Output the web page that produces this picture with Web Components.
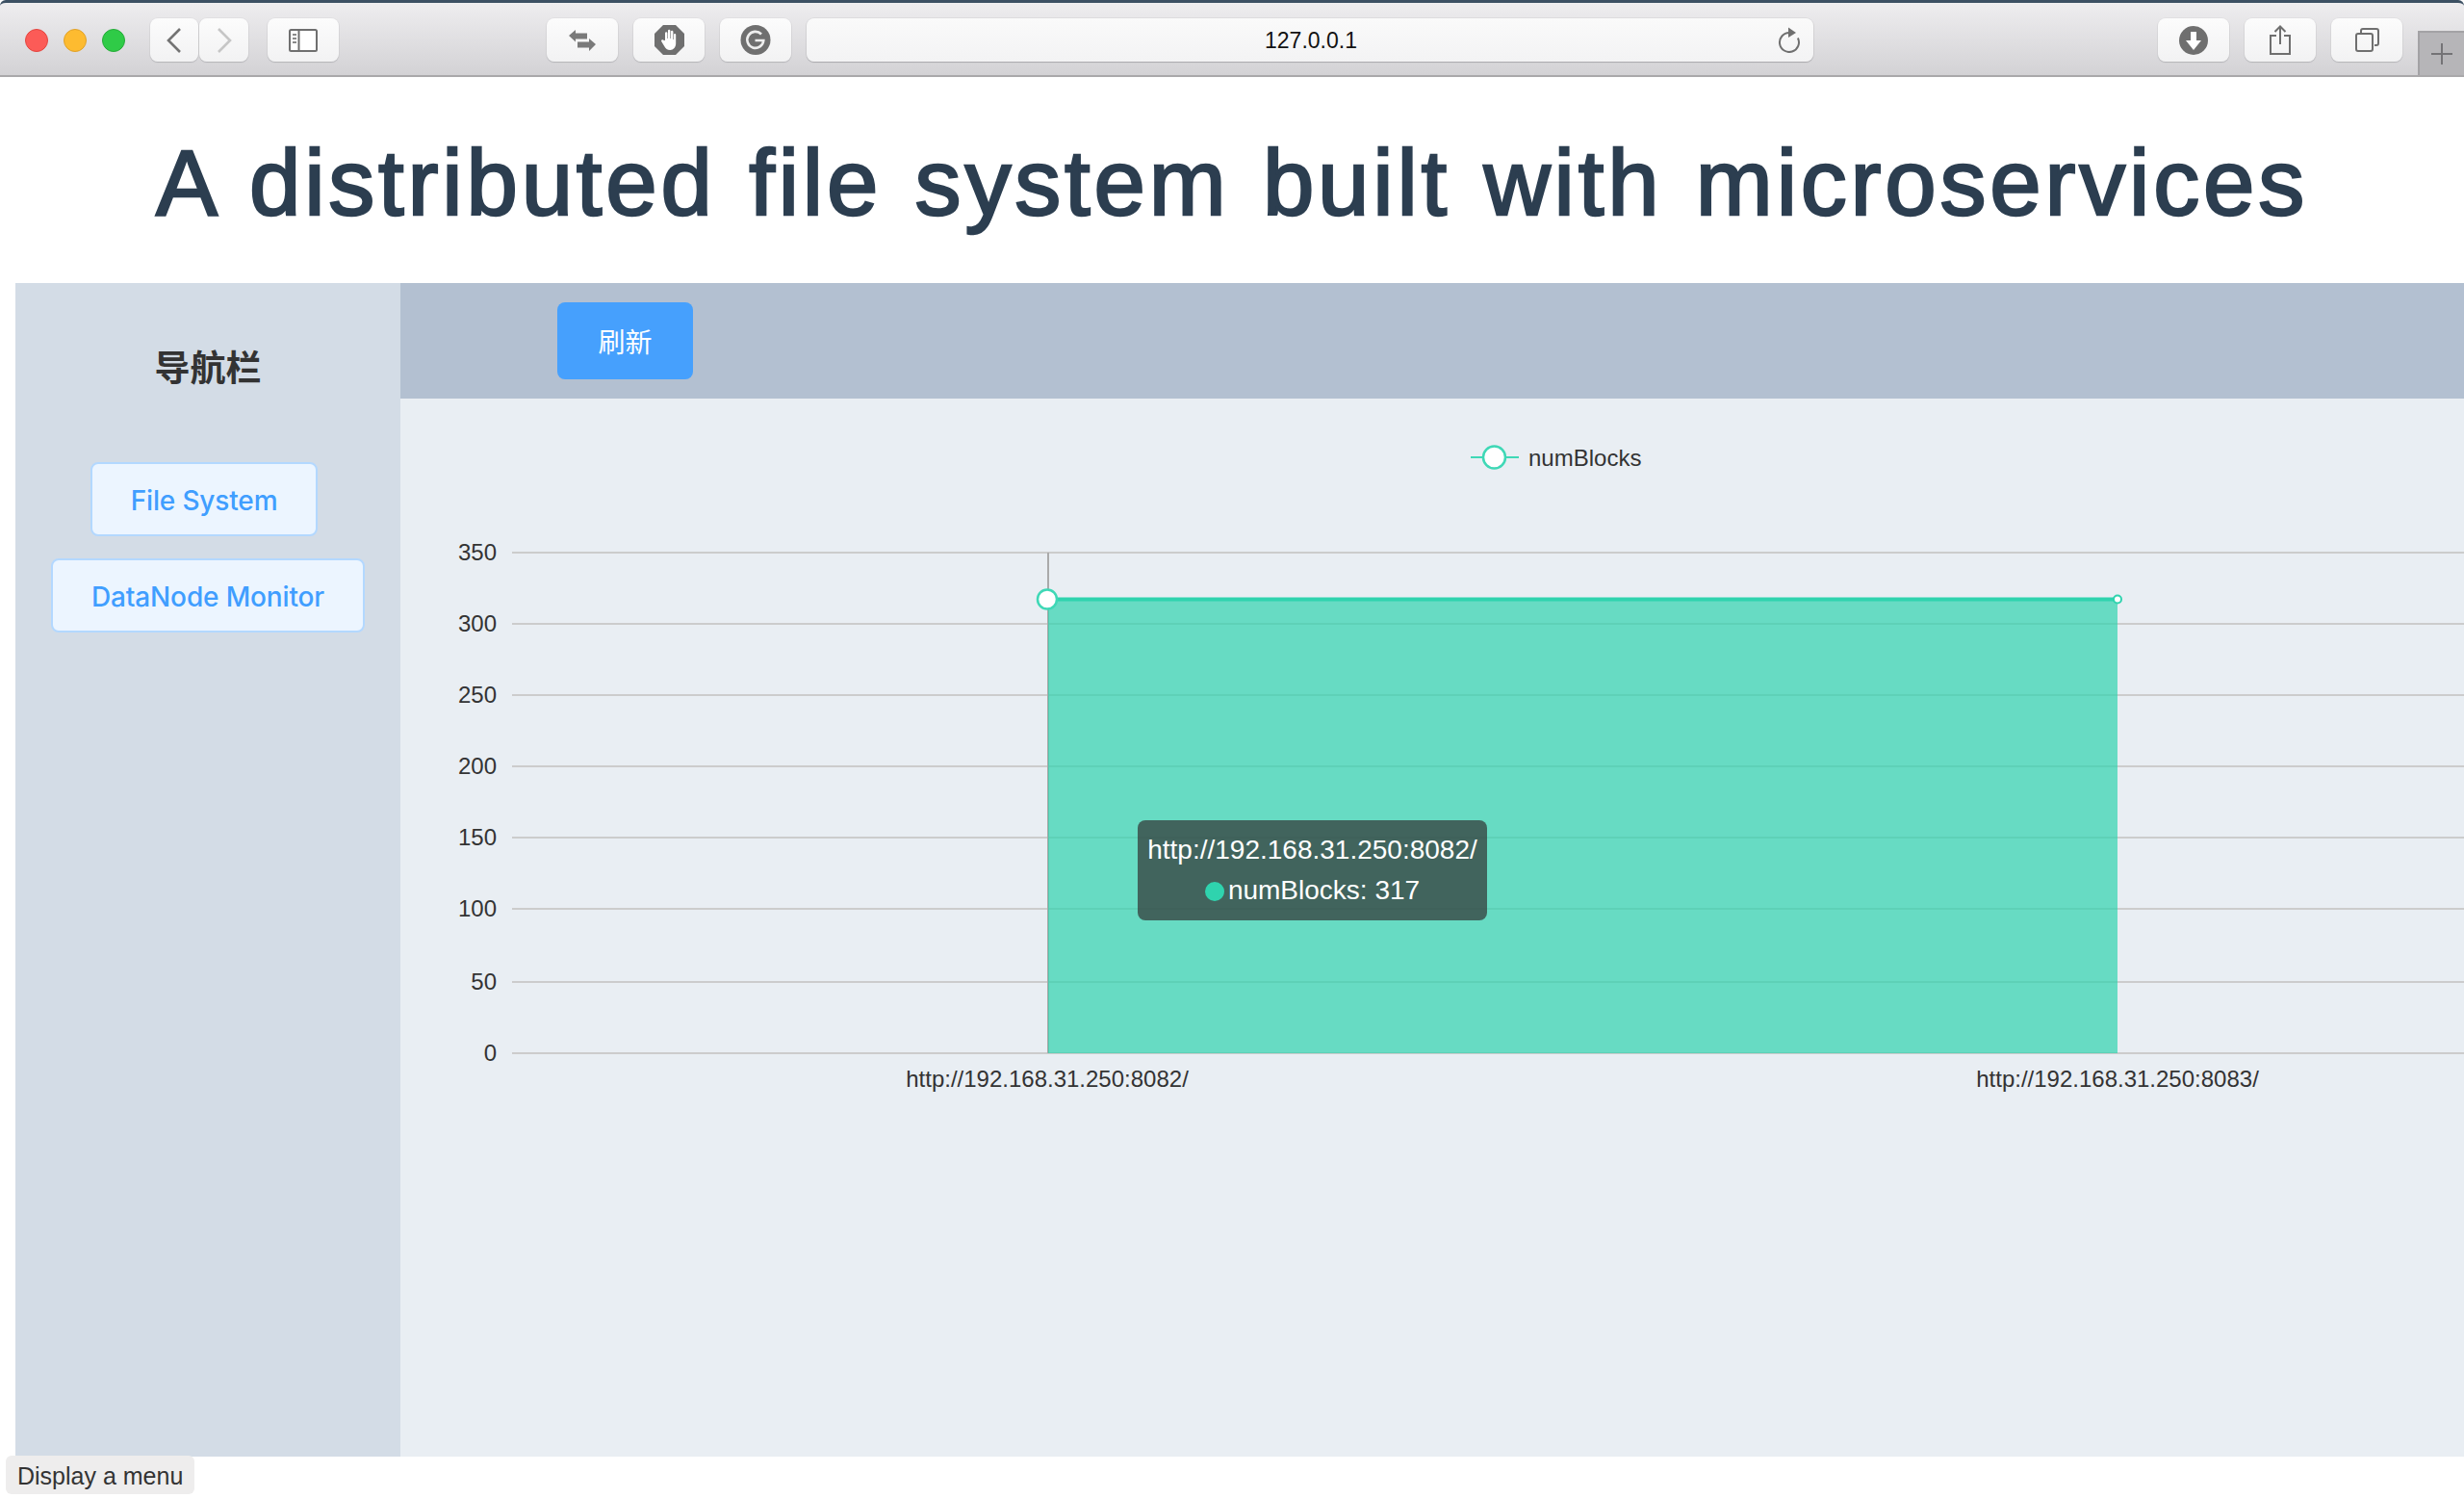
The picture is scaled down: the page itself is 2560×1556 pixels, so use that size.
<!DOCTYPE html>
<html lang="en">
<head>
<meta charset="utf-8">
<title>127.0.0.1</title>
<style>
    html, body{ margin: 0; padding: 0; background: #fff; }
    body{ width: 2560px; height: 1556px; overflow: hidden; font-family: "Liberation Sans", sans-serif; }
</style>
</head>
<body>
<safari-toolbar></safari-toolbar>
<page-title>A distributed file system built with microservices</page-title>
<app-layout>
    <nav-sidebar slot="aside" heading="导航栏">
        <nav-button>File System</nav-button>
        <nav-button>DataNode Monitor</nav-button>
    </nav-sidebar>
    <refresh-bar slot="header">刷新</refresh-bar>
    <blocks-chart slot="main"></blocks-chart>
</app-layout>
<status-tip>Display a menu</status-tip>

<script>
class ToolButton extends HTMLElement{
    constructor(){
        super()
        this.attachShadow({mode: 'open'})
        this.shadowRoot.innerHTML = `
            <style>
                :host{
                    display: flex;
                    flex: none;
                    height: 45px;
                    width: 74px;
                    box-sizing: border-box;
                    align-items: center;
                    justify-content: center;
                    border-radius: 8px;
                    background: linear-gradient(#fcfcfc, #f2f2f3);
                    box-shadow: 0 1px 1px #b5b5b8, 0 0 0 1px rgba(0,0,0,.03);
                }
                ::slotted(svg){ display: block; }
            </style>
            <slot></slot>
        `
    }
}

class SafariToolbar extends HTMLElement{
    constructor(){
        super()
        this.attachShadow({mode: 'open'})
        this.shadowRoot.innerHTML = `
            <style>
                :host{
                    display: flex;
                    align-items: flex-start;
                    box-sizing: border-box;
                    height: 80px;
                    padding: 19px 0 0 26px;
                    background: linear-gradient(#eeedef, #d3d2d5);
                    border-top: 3px solid #3c5063;
                    border-bottom: 2px solid #a9a8aa;
                    border-top-left-radius: 6px;
                    border-top-right-radius: 6px;
                    position: relative;
                }
                .lights{ display: flex; gap: 16px; height: 45px; align-items: center; margin-right: 26px; margin-top: -3px; }
                .lights i{ width: 24px; height: 24px; border-radius: 50%; box-sizing: border-box; display: block; }
                .red{ background: #fc5b57; border: 1px solid #e3453f; }
                .yellow{ background: #fdbb30; border: 1px solid #e0a128; }
                .green{ background: #2fcb47; border: 1px solid #25ab38; }
                .row{ display: flex; margin-top: -3px; }
                #back{ width: 50px; margin-right: 1px; }
                #forward{ width: 51px; margin-right: 20px; }
                #side{ margin-right: 216px; }
                #swap, #hand{ margin-right: 16px; }
                #g{ margin-right: 16px; }
                #url{
                    width: 1046px;
                    height: 45px;
                    position: relative;
                    display: flex;
                    align-items: center;
                    justify-content: center;
                    padding-left: 2px;
                    padding-top: 2px;
                    box-sizing: border-box;
                    border-radius: 8px;
                    background: linear-gradient(#fafafa, #f3f3f4);
                    box-shadow: 0 1px 1px #aaa9ad, 0 0 0 1px rgba(0,0,0,.05);
                    font: 23px "Liberation Sans", sans-serif;
                    color: #111;
                    margin-right: 358px;
                }
                #url svg{ position: absolute; right: 12px; top: 8px; }
                #down, #share{ margin-right: 16px; }
                #tab{
                    position: absolute;
                    left: 2512px;
                    right: 0;
                    top: 29px;
                    bottom: 0;
                    background: #b6b5b8;
                    border-left: 2px solid #a3a2a5;
                    border-top: 2px solid #a3a2a5;
                    box-sizing: border-box;
                    display: flex;
                    align-items: center;
                    justify-content: center;
                }
            </style>
            <div class="lights"><i class="red"></i><i class="yellow"></i><i class="green"></i></div>
            <div class="row">
                <tool-button id="back"><svg width="18" height="26" viewBox="0 0 18 26"><path d="M15 1 3 13l12 12" fill="none" stroke="#737373" stroke-width="2.6"/></svg></tool-button>
                <tool-button id="forward"><svg width="18" height="26" viewBox="0 0 18 26"><path d="M3 1l12 12L3 25" fill="none" stroke="#c6c6c6" stroke-width="2.6"/></svg></tool-button>
                <tool-button id="side"><svg width="30" height="24" viewBox="0 0 30 24"><rect x="1" y="1" width="28" height="22" rx="1.5" fill="#fff" stroke="#6f6f6f" stroke-width="2"/><path d="M10.5 1v22" stroke="#6f6f6f" stroke-width="2"/><path d="M4 6h4M4 10h4M4 14h4" stroke="#8a8a8a" stroke-width="2"/></svg></tool-button>
                <tool-button id="swap"><svg width="28" height="22" viewBox="0 0 28 22"><path d="M0 6 7 0v3.500h12v6H7V12.500zM28 15l-7-6v3.500H9v6h12V22z" fill="#7a7a7a"/></svg></tool-button>
                <tool-button id="hand"><svg width="31" height="31" viewBox="0 0 31 31"><path d="M9 0h13l9 9v13l-9 9H9l-9-9V9z" fill="#6f6f6f"/><path d="M11 16V8.500a1.200 1.200 0 0 1 2.400 0V14h.6V6a1.200 1.200 0 0 1 2.400 0v8h.6V7a1.200 1.200 0 0 1 2.400 0v8h.6V10a1.100 1.100 0 0 1 2.200 0v9c0 4-2.500 7-6 7-3 0-4.500-1.500-6-4l-3-5c-.7-1.300 1-2.500 2-1.300z" fill="#fff"/></svg></tool-button>
                <tool-button id="g"><svg width="32" height="31" viewBox="0 0 32 31"><circle cx="16" cy="15.500" r="15.500" fill="#6f6f6f"/><path d="M22 9.500a8.500 8.500 0 1 0 2.300 6.500H15.500" fill="none" stroke="#eee" stroke-width="2.600"/></svg></tool-button>
            </div>
            <div class="row">
                <div id="url">127.0.0.1<svg width="26" height="28" viewBox="0 0 26 28"><path d="M13 7a10 10 0 1 0 8.900 5.500" fill="none" stroke="#6f6f6f" stroke-width="2"/><path d="M12 1.500 20 7l-8 5z" fill="#6f6f6f"/></svg></div>
                <tool-button id="down"><svg width="30" height="30" viewBox="0 0 30 30"><circle cx="15" cy="15" r="15" fill="#6f6f6f"/><path d="M12 6h6v9h5l-8 10-8-10h5z" fill="#fff"/></svg></tool-button>
                <tool-button id="share"><svg width="24" height="31" viewBox="0 0 24 31"><path d="M8 11H2v19h20V11h-6" fill="none" stroke="#6f6f6f" stroke-width="2"/><path d="M12 20V2M6.500 7 12 1.500 17.500 7" fill="none" stroke="#6f6f6f" stroke-width="2"/></svg></tool-button>
                <tool-button id="tabs"><svg width="25" height="25" viewBox="0 0 25 25"><rect x="1" y="6" width="17" height="18" rx="2" fill="none" stroke="#6f6f6f" stroke-width="2"/><path d="M6 5V3a2 2 0 0 1 2-2h14a2 2 0 0 1 2 2v13a2 2 0 0 1-2 2h-2" fill="none" stroke="#6f6f6f" stroke-width="2"/></svg></tool-button>
            </div>
            <div id="tab"><svg width="24" height="24" viewBox="0 0 24 24"><path d="M12 1v22M1 12h22" stroke="#747376" stroke-width="2"/></svg></div>
        `
    }
}

class PageTitle extends HTMLElement{
    constructor(){
        super()
        this.attachShadow({mode: 'open'})
        this.shadowRoot.innerHTML = `
            <style>
                :host{
                    display: flex;
                    box-sizing: border-box;
                    height: 214px;
                    padding-top: 5px;
                    justify-content: center;
                    align-items: center;
                    color: #2c3e50;
                    font: 400 96px "Liberation Sans", sans-serif;
                    font-variant-ligatures: common-ligatures;
                    -webkit-text-stroke: 2.4px #2c3e50;
                    letter-spacing: 3.8px;
                    word-spacing: 4px;
                    white-space: nowrap;
                }
            </style>
            <slot></slot>
        `
    }
}

class AppLayout extends HTMLElement{
    constructor(){
        super()
        this.attachShadow({mode: 'open'})
        this.shadowRoot.innerHTML = `
            <style>
                :host{
                    display: flex;
                    height: 1219px;
                    margin-left: 16px;
                }
                #right{
                    flex: 1;
                    min-width: 0;
                    display: flex;
                    flex-direction: column;
                }
            </style>
            <slot name="aside"></slot>
            <div id="right">
                <slot name="header"></slot>
                <slot name="main"></slot>
            </div>
        `
    }
}

class NavSidebar extends HTMLElement{
    constructor(){
        super()
        this.attachShadow({mode: 'open'})
        this.shadowRoot.innerHTML = `
            <style>
                :host{
                    display: flex;
                    flex-direction: column;
                    align-items: center;
                    box-sizing: border-box;
                    width: 400px;
                    flex: none;
                    background: #d3dce6;
                    padding-top: 60px;
                }
                h3{
                    margin: 0 0 74px;
                    font: 700 37px/52px "Noto Sans CJK SC", sans-serif;
                    color: #333;
                }
                #list{
                    display: flex;
                    flex-direction: column;
                    align-items: center;
                    gap: 23px;
                }
            </style>
            <h3></h3>
            <div id="list"><slot></slot></div>
        `
        this.shadowRoot.querySelector('h3').textContent = this.getAttribute('heading')
    }
}

class NavButton extends HTMLElement{
    constructor(){
        super()
        this.attachShadow({mode: 'open'})
        this.shadowRoot.innerHTML = `
            <style>
                :host{
                    display: block;
                    box-sizing: border-box;
                    height: 77px;
                    padding: 0 40px;
                    border: 2px solid #b3d8ff;
                    border-radius: 8px;
                    background: #ecf5ff;
                    color: #409eff;
                    font: 450 28px/76px Inter, "Noto Sans", sans-serif;
                    letter-spacing: -.15px;
                }
                :host(:first-child){ margin-right: 8px; }
            </style>
            <slot></slot>
        `
    }
}

class RefreshBar extends HTMLElement{
    constructor(){
        super()
        this.attachShadow({mode: 'open'})
        this.shadowRoot.innerHTML = `
            <style>
                :host{
                    display: flex;
                    align-items: center;
                    box-sizing: border-box;
                    height: 120px;
                    flex: none;
                    padding-left: 163px;
                    background: #b3c0d1;
                }
                #btn{
                    width: 141px;
                    height: 80px;
                    border-radius: 8px;
                    background: #46a0fd;
                    color: #fff;
                    display: flex;
                    align-items: center;
                    justify-content: center;
                    font: 400 28px "Noto Sans CJK SC", sans-serif;
                }
            </style>
            <div id="btn"><slot></slot></div>
        `
    }
}

class BlocksChart extends HTMLElement{
    constructor(){
        super()
        this.attachShadow({mode: 'open'})
        const ticks = [0, 50, 100, 150, 200, 250, 300, 350]
        const ys = [1094, 1020, 944, 870, 796, 722, 648, 574].map(y => y - 414)
        const grid = ys.map(y => `<path d="M116 ${y}H2144" stroke="#ccc" stroke-width="2"/>`).join('')
        const labels = ticks.map((t, i) => `<text x="100" y="${ys[i] + 8}" text-anchor="end">${t}</text>`).join('')
        this.shadowRoot.innerHTML = `
            <style>
                :host{
                    display: block;
                    flex: 1;
                    background: #e9eef3;
                    position: relative;
                    overflow: hidden;
                }
                svg{ display: block; font: 24px "Liberation Sans", sans-serif; }
                text{ fill: #333; }
                #tip{
                    position: absolute;
                    left: 766px;
                    top: 438px;
                    width: 363px;
                    height: 104px;
                    box-sizing: border-box;
                    padding-top: 10px;
                    border-radius: 8px;
                    background: rgba(50,50,50,.7);
                    color: #fff;
                    font: 28px/42px "Liberation Sans", sans-serif;
                    text-align: center;
                    white-space: nowrap;
                }
                #tip i{
                    display: inline-block;
                    width: 20px;
                    height: 20px;
                    margin-right: 4px;
                    border-radius: 50%;
                    background: #2fd3ae;
                    vertical-align: -2px;
                }
            </style>
            <svg width="2144" height="1099" viewBox="0 0 2144 1099">
                ${grid}
                ${labels}
                <path d="M673 160V680" stroke="#aaa" stroke-width="2"/>
                <path d="M673 208.500H1784V680H673Z" fill="#2fd3ae" fill-opacity=".7"/>
                <path d="M673 208.500H1784" stroke="#2fd3ae" stroke-width="4"/>
                <circle cx="672" cy="208.500" r="10" fill="#fff" stroke="#3fd8b6" stroke-width="2.500"/>
                <circle cx="1784" cy="208.500" r="4" fill="#fff" stroke="#2fd3ae" stroke-width="2"/>
                <path d="M1112 61h50" stroke="#3fd8b6" stroke-width="2"/>
                <circle cx="1136.500" cy="61" r="11.500" fill="#fff" stroke="#3fd8b6" stroke-width="2.500"/>
                <text x="1172" y="70">numBlocks</text>
                <text x="672" y="715" text-anchor="middle">http://192.168.31.250:8082/</text>
                <text x="1784" y="715" text-anchor="middle">http://192.168.31.250:8083/</text>
            </svg>
            <div id="tip">http://192.168.31.250:8082/<br><i></i>numBlocks: 317</div>
        `
    }
}

class StatusTip extends HTMLElement{
    constructor(){
        super()
        this.attachShadow({mode: 'open'})
        this.shadowRoot.innerHTML = `
            <style>
                :host{
                    position: fixed;
                    left: 6px;
                    top: 1512px;
                    width: 196px;
                    height: 40px;
                    box-sizing: border-box;
                    padding-left: 12px;
                    border-radius: 6px;
                    background: #eeeded;
                    color: #333;
                    font: 25px/42px "Liberation Sans", sans-serif;
                    white-space: nowrap;
                }
            </style>
            <slot></slot>
        `
    }
}

customElements.define('tool-button', ToolButton)
customElements.define('safari-toolbar', SafariToolbar)
customElements.define('page-title', PageTitle)
customElements.define('app-layout', AppLayout)
customElements.define('nav-sidebar', NavSidebar)
customElements.define('nav-button', NavButton)
customElements.define('refresh-bar', RefreshBar)
customElements.define('blocks-chart', BlocksChart)
customElements.define('status-tip', StatusTip)
</script>
</body>
</html>
